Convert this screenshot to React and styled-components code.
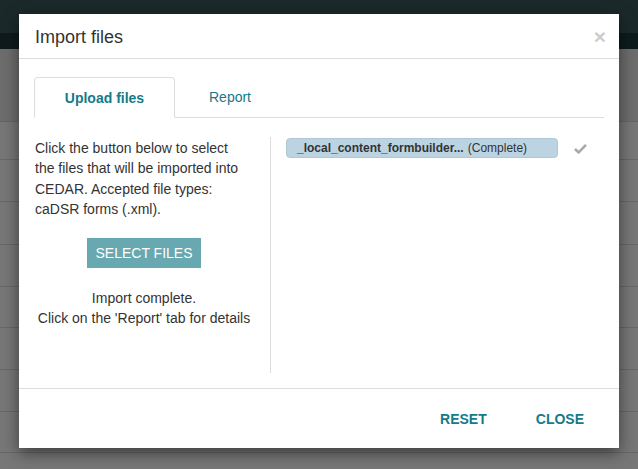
import React, { useState } from 'react';
import styled, { createGlobalStyle } from 'styled-components';

const GlobalStyle = createGlobalStyle`
  html, body {
    margin: 0;
    padding: 0;
    height: 100%;
    overflow: hidden;
  }
  body {
    font-family: "Liberation Sans", Arial, sans-serif;
    background: #727272;
  }
`;

const Page = styled.div`
  position: relative;
  width: 638px;
  height: 469px;
  overflow: hidden;
  background: #747474;
`;

const TopBar = styled.div`
  height: 33px;
  background: #1b292a;
`;

const SubBar = styled.div`
  height: 16px;
  background: #0e1b1c;
`;

const ListHeader = styled.div`
  height: 72px;
  background: #6d6d6d;
  border-bottom: 1px solid #656565;
`;

const ListRow = styled.div`
  height: ${(p) => p.$height}px;
  background: #777;
  border-bottom: 1px solid #676767;
`;

const Modal = styled.div`
  position: absolute;
  left: 19px;
  top: 14px;
  width: 600px;
  height: 434px;
  background: #fff;
  box-shadow: 0 5px 15px rgba(0, 0, 0, 0.5);
  display: flex;
  flex-direction: column;
`;

const Header = styled.div`
  height: 44px;
  padding: 0 16px;
  display: flex;
  align-items: center;
  justify-content: space-between;
  border-bottom: 1px solid #ddd;
`;

const Title = styled.h4`
  margin: 3px 0 0;
  font-size: 18px;
  font-weight: normal;
  color: #333;
`;

const CloseX = styled.button`
  border: none;
  background: none;
  padding: 0;
  margin-right: -3px;
  font-size: 21px;
  font-weight: bold;
  line-height: 1;
  color: #000;
  opacity: 0.2;
  cursor: pointer;
  font-family: "Liberation Sans", Arial, sans-serif;
`;

const Body = styled.div`
  flex: 1;
  padding: 18px 15px 15px;
`;

const TabList = styled.div`
  display: flex;
  align-items: flex-start;
  border-bottom: 1px solid #ddd;
  height: 40px;
`;

const Tab = styled.button`
  width: ${(p) => p.$width}px;
  height: ${(p) => (p.$active ? 41 : 40)}px;
  margin-bottom: ${(p) => (p.$active ? -1 : 0)}px;
  border: 1px solid ${(p) => (p.$active ? '#ddd' : 'transparent')};
  border-bottom-color: ${(p) => (p.$active ? '#fff' : 'transparent')};
  border-radius: 4px 4px 0 0;
  background: ${(p) => (p.$active ? '#fff' : 'transparent')};
  color: #167a88;
  font-family: "Liberation Sans", Arial, sans-serif;
  font-size: 14px;
  font-weight: ${(p) => (p.$active ? 'bold' : 'normal')};
  cursor: pointer;
  padding: 0;
`;

const Columns = styled.div`
  display: flex;
  margin-top: 19px;
`;

const LeftCol = styled.div`
  width: 220px;
  min-height: 236px;
  padding-right: 16px;
  border-right: 1px solid #ddd;
  font-size: 14px;
  line-height: 20.3px;
  color: #333;
`;

const Intro = styled.p`
  margin: 1px 0 0;
  padding-left: 1px;
  max-width: 208px;
`;

const ButtonRow = styled.div`
  display: flex;
  justify-content: center;
  margin: 19px 0 20px;
`;

const SelectButton = styled.button`
  width: 114px;
  height: 30px;
  border: none;
  background: #67a8b1;
  color: #fff;
  font-family: "Liberation Sans", Arial, sans-serif;
  font-size: 14px;
  padding: 0;
  cursor: pointer;
`;

const Status = styled.p`
  margin: 0;
  text-align: center;
`;

const RightCol = styled.div`
  flex: 1;
  padding-left: 15px;
`;

const FileRow = styled.div`
  display: flex;
  align-items: center;
  margin-top: 1px;
`;

const FilePill = styled.div`
  width: 272px;
  height: 20px;
  box-sizing: border-box;
  padding-left: 10px;
  display: flex;
  align-items: center;
  background: #bcd4e1;
  border: 1px solid #b0c8d5;
  border-radius: 4px;
  font-size: 12px;
  color: #333;
  white-space: nowrap;
`;

const FileName = styled.b`
  margin-right: 4px;
`;

const Check = styled.svg`
  margin-left: 16px;
  width: 13px;
  height: 11px;
`;

const Footer = styled.div`
  height: 59px;
  border-top: 1px solid #ddd;
  display: flex;
  align-items: center;
  justify-content: flex-end;
  padding-right: 23px;
  gap: 25px;
`;

const FooterButton = styled.button`
  border: none;
  background: none;
  padding: 6px 12px;
  color: #167a88;
  font-family: "Liberation Sans", Arial, sans-serif;
  font-size: 14px;
  font-weight: bold;
  cursor: pointer;
`;

const rowHeights = [37, 41, 42, 41, 40, 41, 41, 40, 41];

const App = () => {
  const [tab, setTab] = useState('upload');

  return (
    <>
      <GlobalStyle />
      <Page>
        <TopBar />
        <SubBar />
        <ListHeader />
        {rowHeights.map((h, i) => (
          <ListRow key={i} $height={h} />
        ))}

        <Modal>
          <Header>
            <Title>Import files</Title>
            <CloseX>×</CloseX>
          </Header>
          <Body>
            <TabList>
              <Tab $width={141} $active={tab === 'upload'} onClick={() => setTab('upload')}>
                Upload files
              </Tab>
              <Tab $width={110} $active={tab === 'report'} onClick={() => setTab('report')}>
                Report
              </Tab>
            </TabList>
            <Columns>
              <LeftCol>
                <Intro>
                  Click the button below to select the files that will be imported into
                  CEDAR. Accepted file types: caDSR forms (.xml).
                </Intro>
                <ButtonRow>
                  <SelectButton>SELECT FILES</SelectButton>
                </ButtonRow>
                <Status>
                  Import complete.
                  <br />
                  Click on the 'Report' tab for details
                </Status>
              </LeftCol>
              <RightCol>
                <FileRow>
                  <FilePill>
                    <FileName>_local_content_formbuilder...</FileName>
                    (Complete)
                  </FilePill>
                  <Check viewBox="0 0 13 11">
                    <path d="M1 6 L4.6 9.4 L12 1.8" fill="none" stroke="#aaa" strokeWidth="2.6" />
                  </Check>
                </FileRow>
              </RightCol>
            </Columns>
          </Body>
          <Footer>
            <FooterButton>RESET</FooterButton>
            <FooterButton>CLOSE</FooterButton>
          </Footer>
        </Modal>
      </Page>
    </>
  );
};

export default App;
